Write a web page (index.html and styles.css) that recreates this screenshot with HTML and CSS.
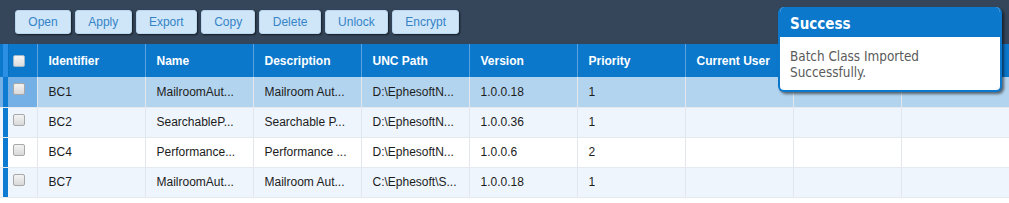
FILE: index.html
```html
<!DOCTYPE html>
<html>
<head>
<meta charset="utf-8">
<link rel="stylesheet" href="styles.css">
</head>
<body>
<div class="page">
  <div class="toolbar">
    <button class="btn">Open</button>
    <button class="btn">Apply</button>
    <button class="btn">Export</button>
    <button class="btn">Copy</button>
    <button class="btn">Delete</button>
    <button class="btn">Unlock</button>
    <button class="btn">Encrypt</button>
  </div>
  <table class="grid">
    <colgroup>
      <col class="c-check">
      <col class="c-data"><col class="c-data"><col class="c-data"><col class="c-data"><col class="c-data"><col class="c-data"><col class="c-data"><col class="c-data"><col class="c-data">
    </colgroup>
    <thead>
      <tr>
        <th class="check"><span class="box"></span></th>
        <th>Identifier</th>
        <th>Name</th>
        <th>Description</th>
        <th>UNC Path</th>
        <th>Version</th>
        <th>Priority</th>
        <th>Current User</th>
        <th></th>
        <th></th>
      </tr>
    </thead>
    <tbody>
      <tr class="selected">
        <td class="check"><span class="box"></span></td>
        <td>BC1</td><td>MailroomAut...</td><td>Mailroom Aut...</td><td>D:\EphesoftN...</td><td>1.0.0.18</td><td>1</td><td></td><td></td><td></td>
      </tr>
      <tr class="alt">
        <td class="check"><span class="box"></span></td>
        <td>BC2</td><td>SearchableP...</td><td>Searchable P...</td><td>D:\EphesoftN...</td><td>1.0.0.36</td><td>1</td><td></td><td></td><td></td>
      </tr>
      <tr>
        <td class="check"><span class="box"></span></td>
        <td>BC4</td><td>Performance...</td><td>Performance ...</td><td>D:\EphesoftN...</td><td>1.0.0.6</td><td>2</td><td></td><td></td><td></td>
      </tr>
      <tr class="alt">
        <td class="check"><span class="box"></span></td>
        <td>BC7</td><td>MailroomAut...</td><td>Mailroom Aut...</td><td>C:\Ephesoft\S...</td><td>1.0.0.18</td><td>1</td><td></td><td></td><td></td>
      </tr>
    </tbody>
  </table>
  <div class="toast">
    <div class="toast-title">Success</div>
    <div class="toast-body">Batch Class Imported Successfully.</div>
  </div>
</div>
</body>
</html>
```
FILE: styles.css
```css
html, body {
  margin: 0;
  padding: 0;
  background: #ffffff;
}
.page {
  position: relative;
  width: 1009px;
  height: 203px;
  overflow: hidden;
  font-family: "Liberation Sans", Arial, sans-serif;
  font-size: 12px;
}
.toolbar {
  background: #35465a;
  height: 44px;
  box-sizing: border-box;
  padding: 10px 0 0 15px;
  display: flex;
  gap: 4px;
  align-items: flex-start;
}
.btn {
  height: 24px;
  padding: 0 12.3px;
  margin: 0;
  border: 1px solid #b9d6ee;
  border-radius: 3px;
  background: #cfe6f9;
  color: #3583c6;
  font-family: "Liberation Sans", Arial, sans-serif;
  font-size: 12px;
  line-height: 22px;
  box-shadow: 1px 1px 2px rgba(0, 0, 0, 0.6);
}
.grid {
  border-collapse: collapse;
  table-layout: fixed;
  width: 1009px;
}
.c-check { width: 37px; }
.c-data { width: 108px; }
.grid th {
  height: 33px;
  padding: 0 0 0 11px;
  box-sizing: border-box;
  background-color: #0b78cc;
  color: #ffffff;
  font-weight: bold;
  text-align: left;
  border-left: 1px solid #5aa3e0;
  white-space: nowrap;
  overflow: hidden;
}
.grid td {
  height: 30px;
  padding: 0 0 0 11px;
  box-sizing: border-box;
  color: #1c1c1c;
  border-left: 1px solid #e1e7ed;
  border-bottom: 1px solid #e4eaf0;
  white-space: nowrap;
  overflow: hidden;
  background-color: #ffffff;
}
.grid tr.alt td { background-color: #eef5fc; }
.grid tr.selected td { background-color: #b3d4ef; }
.grid th.check,
.grid td.check {
  border-left: none;
  padding: 0 0 0 13px;
  background-image: linear-gradient(to right, transparent 3px, #0e7bd2 3px, #0e7bd2 8px, transparent 8px);
}
.grid th.check {
  background-image: linear-gradient(to right, transparent 3px, #2b90e4 3px, #2b90e4 8px, #0870c2 8px, #0870c2 9px, transparent 9px);
}
.grid td.check {
  vertical-align: top;
  padding-top: 6px;
}
.grid tr.selected td.check { background-color: #74b0e5; }
.box {
  display: block;
  width: 12px;
  height: 12px;
  box-sizing: border-box;
  border: 1px solid #a8a8a8;
  border-radius: 2px;
  background: linear-gradient(#f3f3f3, #d9d9d9);
}
th .box {
  border-color: #9fb8cc;
  background: linear-gradient(#f6f6f6, #dcdcdc);
}
.toast {
  position: absolute;
  left: 778px;
  top: 7px;
  width: 224px;
  height: 85px;
  box-sizing: border-box;
  border: 2px solid #0b78cc;
  border-top: none;
  border-radius: 6px;
  background: #ffffff;
  box-shadow: 2px 2px 3px rgba(0, 0, 0, 0.55);
  overflow: hidden;
  font-family: "DejaVu Sans Condensed", "DejaVu Sans", sans-serif;
}
.toast-title {
  height: 30px;
  box-sizing: border-box;
  background: #0b78cc;
  color: #ffffff;
  font-weight: bold;
  font-size: 15px;
  line-height: 34px;
  padding-left: 10px;
}
.toast-body {
  padding: 12px 10px 0 10px;
  color: #5a5a5a;
  font-size: 13.4px;
  line-height: 16px;
}
```
